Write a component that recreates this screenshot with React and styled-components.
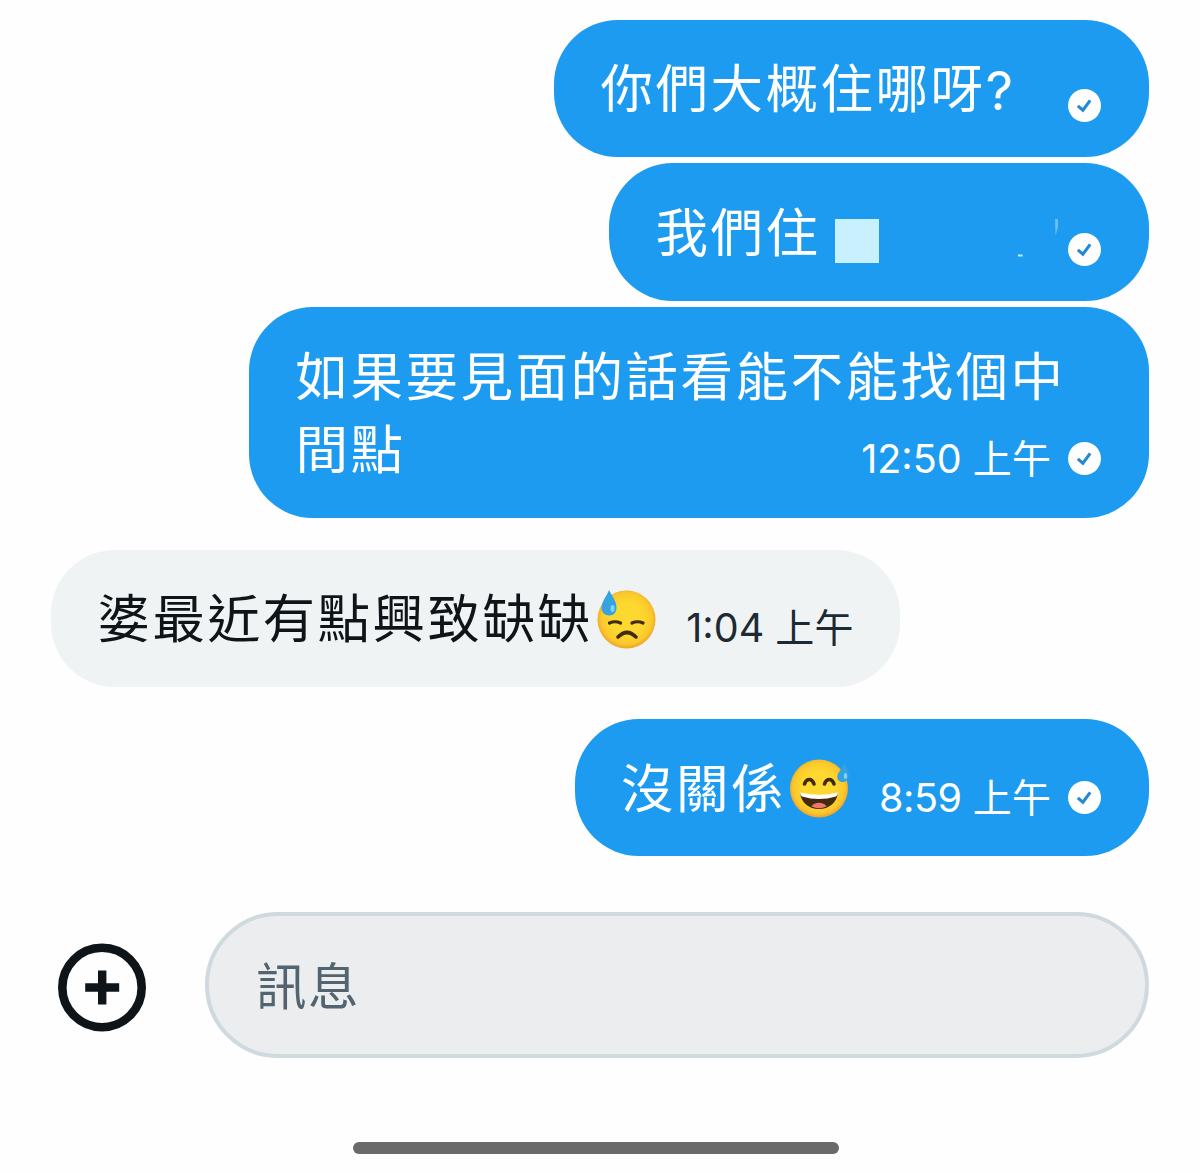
import React from 'react';
import styled, { createGlobalStyle } from 'styled-components';

const GlobalStyle = createGlobalStyle`
    * {
        box-sizing: border-box;
    }

    body {
        margin: 0;
        background: #fefefe;
        font-family: 'Noto Sans CJK TC', 'Noto Sans CJK SC', sans-serif;
    }
`;

const Screen = styled.main`
    display: flex;
    flex-direction: column;
    width: 1200px;
    height: 1173px;
    padding: 19.5px 51px 0;
    overflow: hidden;
`;

const Thread = styled.div`
    display: flex;
    flex-direction: column;
`;

const Bubble = styled.div`
    display: flex;
    align-self: ${({ $own }) => ($own ? 'flex-end' : 'flex-start')};
    justify-content: space-between;
    align-items: flex-end;
    width: ${({ $width }) => $width}px;
    height: ${({ $tall }) => ($tall ? 210.8 : 137.3)}px;
    margin-top: ${({ $gap }) => $gap || 0}px;
    padding: 29.8px ${({ $own }) => ($own ? 48 : 46)}px 33.8px 46.5px;
    border-radius: 64px;
    background: ${({ $own }) => ($own ? '#1d9bf0' : '#eff3f4')};
    color: ${({ $own }) => ($own ? '#fff' : '#0f1419')};
`;

const Message = styled.div`
    display: flex;
    align-items: center;
    font-size: 52.5px;
    line-height: 73.7px;
    letter-spacing: 2.5px;
    white-space: nowrap;
`;

const LongMessage = styled(Message)`
    display: block;
    flex: none;
    width: 0;
`;

const Latin = styled.span`
    margin: 5px 0 -5px;
    font-family: Inter, sans-serif;
    font-size: 54px;
`;

const Meta = styled.div`
    display: flex;
    align-items: center;
    gap: 16.5px;
    height: 33px;
    margin-bottom: ${({ $bare }) => ($bare ? 1.2 : 8.8)}px;
    white-space: nowrap;
`;

const Time = styled.time`
    display: flex;
    align-items: baseline;
    gap: 11px;
    margin-top: -2px;
    font-size: 39px;
    line-height: 50px;
    letter-spacing: 0.4px;
    color: ${({ $dark }) => ($dark ? '#1d2a34' : 'inherit')};
`;

const Clock = styled.span`
    font-family: Inter, sans-serif;
    font-size: 39.5px;
    letter-spacing: ${({ $spacing }) => $spacing || 0}px;
`;

const Sticker = styled.svg`
    flex: none;
    width: 60px;
    height: 60px;
    margin: 5px 0 0 3px;
`;

const Redacted = styled.span`
    width: 44px;
    height: 44px;
    margin: 22px 0 0 14.5px;
    background: #c8f0ff;
`;

const Residue = styled.svg`
    width: 42px;
    height: 42px;
    margin: 19px 0 0 138px;
`;

const Composer = styled.div`
    display: flex;
    align-items: center;
    gap: 58px;
    margin-top: 55.5px;
    padding-left: 7px;
`;

const AddButton = styled.button`
    flex: none;
    width: 89px;
    height: 89px;
    margin-top: 5px;
    padding: 0;
    border: 0;
    background: none;

    svg {
        display: block;
    }
`;

const Field = styled.div`
    display: flex;
    align-items: center;
    flex: 1;
    height: 146px;
    padding: 0 0 4px 47px;
    border: 4px solid #cfd9de;
    border-radius: 73px;
    background: #ecedef;
    color: #536471;
    font-size: 50.5px;
    letter-spacing: 1.5px;
`;

const HomeBar = styled.div`
    align-self: center;
    width: 486px;
    height: 12px;
    margin-top: 84.5px;
    margin-right: 8px;
    border-radius: 6px;
    background: #6a6a6a;
`;

const Check = () => (
    <svg width="33" height="33" viewBox="0 0 33 33">
        <circle cx="16.5" cy="16.5" r="16.5" fill="#fff" />
        <path d="M9.8 16.8L14.9 21.2L22.2 11.4" fill="none" stroke="#2489d3" strokeWidth="3.1" />
    </svg>
);

const FaceGradient = ({ id }) => (
    <radialGradient id={id} cx="50%" cy="48%" r="52%">
        <stop offset="0.5" stopColor="#fdd92f" />
        <stop offset="0.85" stopColor="#fbc82b" />
        <stop offset="1" stopColor="#f0a229" />
    </radialGradient>
);

const DowncastFace = () => (
    <Sticker viewBox="0 0 60 60">
        <defs>
            <FaceGradient id="downcast" />
        </defs>
        <circle cx="30.5" cy="30.5" r="29" fill="url(#downcast)" />
        <path d="M13.5 34Q19 31.5 24.5 34" fill="none" stroke="#422b0d" strokeWidth="3.2" strokeLinecap="round" />
        <path d="M36 34Q41.5 31.5 47 34" fill="none" stroke="#422b0d" strokeWidth="3.2" strokeLinecap="round" />
        <path d="M22 48Q31 39 40 48" fill="none" stroke="#422b0d" strokeWidth="3.6" strokeLinecap="round" />
        <path d="M13 1C16 7 20.5 12 20.5 18.5C20.5 23.5 17.5 26.5 13.5 26.5C9 26.5 5.5 23.5 5.5 19C5.5 12.5 11 7 13 1Z" fill="#35a3df" />
        <ellipse cx="16.5" cy="19.5" rx="2" ry="3.5" fill="#81d4fa" />
    </Sticker>
);

const SweatGrinFace = () => (
    <Sticker viewBox="0 0 60 60">
        <defs>
            <FaceGradient id="grin" />
        </defs>
        <circle cx="30" cy="30.5" r="29" fill="url(#grin)" />
        <path d="M15.5 26C17.5 20 23 20 25 26" fill="none" stroke="#422b0d" strokeWidth="3.6" strokeLinecap="round" />
        <path d="M35.5 26C37.5 20 43 20 45 26" fill="none" stroke="#422b0d" strokeWidth="3.6" strokeLinecap="round" />
        <path d="M11 35Q30 40.5 49 35C47.5 45 40 51 30 51C20 51 12.5 45 11 35Z" fill="#422b0d" />
        <path d="M11 34.5Q30 39 49 34.5Q49 37 47 38.5Q30 43.5 13 38.5Q11 37 11 34.5Z" fill="#fff" />
        <path d="M22.5 48.5C25 43.5 35 43.5 37.5 48.5Q30 52 22.5 48.5Z" fill="#ed7770" />
        <path d="M55.5 4.5C57 10 59.8 13 59.8 18C59.8 21.5 57 24 54 24C50.5 24 48 22 48.3 18C49 13.5 54.5 10 55.5 4.5Z" fill="#35a3df" />
        <ellipse cx="56.5" cy="18" rx="1.6" ry="3" fill="#81d4fa" />
    </Sticker>
);

const Stamp = ({ clock, spacing, own }) => (
    <Meta>
        <Time $dark={!own}>
            <Clock $spacing={spacing}>{clock}</Clock>
            上午
        </Time>
        {own && <Check />}
    </Meta>
);

export default function App() {
    return (
        <Screen>
            <GlobalStyle />
            <Thread>
                <Bubble $own $width={595}>
                    <Message>
                        你們大概住哪呀<Latin>?</Latin>
                    </Message>
                    <Meta $bare>
                        <Check />
                    </Meta>
                </Bubble>
                <Bubble $own $width={540} $gap={6.5}>
                    <Message>
                        我們住
                        <Redacted />
                        <Residue viewBox="0 0 42 42">
                            <path d="M1 36.5H5.5V38.5H1Z" fill="#c8f0ff" />
                            <path d="M38 1H41V9L38.5 18Z" fill="#6dbdf5" />
                        </Residue>
                    </Message>
                    <Meta $bare>
                        <Check />
                    </Meta>
                </Bubble>
                <Bubble $own $tall $width={900} $gap={6.5}>
                    <LongMessage>
                        如果要見面的話看能不能找個中
                        <br />
                        間點
                    </LongMessage>
                    <Stamp own clock="12:50" />
                </Bubble>
                <Bubble $width={849} $gap={31.8}>
                    <Message>
                        婆最近有點興致缺缺
                        <DowncastFace />
                    </Message>
                    <Stamp clock="1:04" />
                </Bubble>
                <Bubble $own $width={574.5} $gap={32}>
                    <Message>
                        沒關係
                        <SweatGrinFace />
                    </Message>
                    <Stamp own clock="8:59" spacing={-0.4} />
                </Bubble>
            </Thread>
            <Composer>
                <AddButton aria-label="+">
                    <svg width="89" height="89" viewBox="0 0 89 89">
                        <circle cx="44" cy="44.5" r="39.7" fill="none" stroke="#0f1419" strokeWidth="8.6" />
                        <path d="M44.2 27.5V61.5M27.2 44.5H61.2" stroke="#0f1419" strokeWidth="8.4" />
                    </svg>
                </AddButton>
                <Field>訊息</Field>
            </Composer>
            <HomeBar />
        </Screen>
    );
}
